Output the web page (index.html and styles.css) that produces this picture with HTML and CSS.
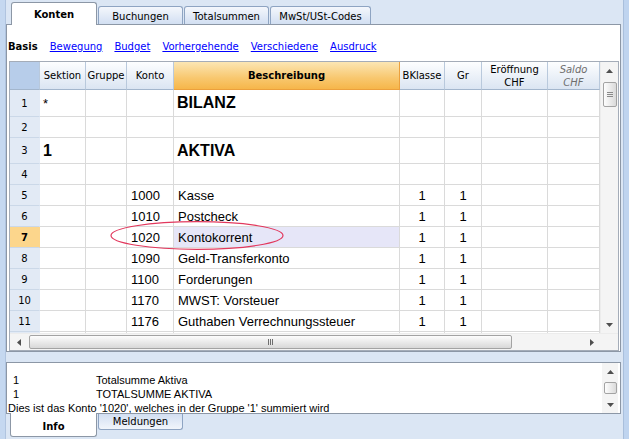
FILE: index.html
```html
<!DOCTYPE html>
<html lang="de">

<head>
    <meta charset="UTF-8">
    <title>Konten</title>
    <link rel="stylesheet" href="styles.css">
</head>

<body>
    <div class="app">
        <div class="edge-left"></div>

        <div class="workspace">
            <!-- Register oben -->
            <div class="tabs">
                <div class="tab active">Konten</div>
                <div class="tab">Buchungen</div>
                <div class="tab">Totalsummen</div>
                <div class="tab wide">MwSt/USt-Codes</div>
            </div>

            <div class="panel">
                <div class="views">
                    <b>Basis</b>
                    <a href="#">Bewegung</a>
                    <a href="#">Budget</a>
                    <a href="#">Vorhergehende</a>
                    <a href="#">Verschiedene</a>
                    <a href="#">Ausdruck</a>
                </div>

                <div class="table-box">
                    <div class="table-main">
                        <div class="table">
                            <div class="grid head">
                                <div class="hc corner"></div>
                                <div class="hc">Sektion</div>
                                <div class="hc">Gruppe</div>
                                <div class="hc">Konto</div>
                                <div class="hc current">Beschreibung</div>
                                <div class="hc">BKlasse</div>
                                <div class="hc">Gr</div>
                                <div class="hc">Eröffnung<br>CHF</div>
                                <div class="hc calc">Saldo<br>CHF</div>
                            </div>

                            <div class="rows">
                                <div class="grid row tall">
                                    <div class="c rn">1</div>
                                    <div class="c star">*</div>
                                    <div class="c"></div>
                                    <div class="c"></div>
                                    <div class="c big">BILANZ</div>
                                    <div class="c"></div>
                                    <div class="c"></div>
                                    <div class="c"></div>
                                    <div class="c"></div>
                                </div>
                                <div class="grid row">
                                    <div class="c rn">2</div>
                                    <div class="c"></div>
                                    <div class="c"></div>
                                    <div class="c"></div>
                                    <div class="c"></div>
                                    <div class="c"></div>
                                    <div class="c"></div>
                                    <div class="c"></div>
                                    <div class="c"></div>
                                </div>
                                <div class="grid row mid">
                                    <div class="c rn">3</div>
                                    <div class="c big">1</div>
                                    <div class="c"></div>
                                    <div class="c"></div>
                                    <div class="c big">AKTIVA</div>
                                    <div class="c"></div>
                                    <div class="c"></div>
                                    <div class="c"></div>
                                    <div class="c"></div>
                                </div>
                                <div class="grid row">
                                    <div class="c rn">4</div>
                                    <div class="c"></div>
                                    <div class="c"></div>
                                    <div class="c"></div>
                                    <div class="c"></div>
                                    <div class="c"></div>
                                    <div class="c"></div>
                                    <div class="c"></div>
                                    <div class="c"></div>
                                </div>
                                <div class="grid row">
                                    <div class="c rn">5</div>
                                    <div class="c"></div>
                                    <div class="c"></div>
                                    <div class="c">1000</div>
                                    <div class="c">Kasse</div>
                                    <div class="c mid-text">1</div>
                                    <div class="c mid-text">1</div>
                                    <div class="c"></div>
                                    <div class="c"></div>
                                </div>
                                <div class="grid row">
                                    <div class="c rn">6</div>
                                    <div class="c"></div>
                                    <div class="c"></div>
                                    <div class="c">1010</div>
                                    <div class="c">Postcheck</div>
                                    <div class="c mid-text">1</div>
                                    <div class="c mid-text">1</div>
                                    <div class="c"></div>
                                    <div class="c"></div>
                                </div>
                                <div class="grid row">
                                    <div class="c rn selected">7</div>
                                    <div class="c"></div>
                                    <div class="c"></div>
                                    <div class="c">1020</div>
                                    <div class="c focus">Kontokorrent</div>
                                    <div class="c mid-text">1</div>
                                    <div class="c mid-text">1</div>
                                    <div class="c"></div>
                                    <div class="c"></div>
                                </div>
                                <div class="grid row">
                                    <div class="c rn">8</div>
                                    <div class="c"></div>
                                    <div class="c"></div>
                                    <div class="c">1090</div>
                                    <div class="c">Geld-Transferkonto</div>
                                    <div class="c mid-text">1</div>
                                    <div class="c mid-text">1</div>
                                    <div class="c"></div>
                                    <div class="c"></div>
                                </div>
                                <div class="grid row">
                                    <div class="c rn">9</div>
                                    <div class="c"></div>
                                    <div class="c"></div>
                                    <div class="c">1100</div>
                                    <div class="c">Forderungen</div>
                                    <div class="c mid-text">1</div>
                                    <div class="c mid-text">1</div>
                                    <div class="c"></div>
                                    <div class="c"></div>
                                </div>
                                <div class="grid row">
                                    <div class="c rn">10</div>
                                    <div class="c"></div>
                                    <div class="c"></div>
                                    <div class="c">1170</div>
                                    <div class="c">MWST: Vorsteuer</div>
                                    <div class="c mid-text">1</div>
                                    <div class="c mid-text">1</div>
                                    <div class="c"></div>
                                    <div class="c"></div>
                                </div>
                                <div class="grid row">
                                    <div class="c rn">11</div>
                                    <div class="c"></div>
                                    <div class="c"></div>
                                    <div class="c">1176</div>
                                    <div class="c">Guthaben Verrechnungssteuer</div>
                                    <div class="c mid-text">1</div>
                                    <div class="c mid-text">1</div>
                                    <div class="c"></div>
                                    <div class="c"></div>
                                </div>
                                <!-- angeschnittene naechste Zeile -->
                                <div class="grid row">
                                    <div class="c rn"></div>
                                    <div class="c"></div>
                                    <div class="c"></div>
                                    <div class="c"></div>
                                    <div class="c"></div>
                                    <div class="c"></div>
                                    <div class="c"></div>
                                    <div class="c"></div>
                                    <div class="c"></div>
                                </div>
                            </div>

                            <!-- Markierung um Konto 1020 -->
                            <svg class="mark" width="176" height="32" viewBox="0 0 176 32">
                                <ellipse cx="87" cy="15.5" rx="86" ry="13.8" fill="none" stroke="#e2385d" stroke-width="1.2"/>
                            </svg>
                        </div>

                        <div class="vscroll">
                            <div class="sb-btn">
                                <svg width="7" height="4"><polygon points="0,4 3.5,0 7,4" fill="#4f4f4f"/></svg>
                            </div>
                            <div class="vthumb">
                                <span></span><span></span><span></span>
                            </div>
                            <div class="sb-fill"></div>
                            <div class="sb-btn">
                                <svg width="7" height="4"><polygon points="0,0 7,0 3.5,4" fill="#4f4f4f"/></svg>
                            </div>
                        </div>
                    </div>

                    <div class="hscroll-row">
                        <div class="hscroll">
                            <div class="sb-btn h">
                                <svg width="4" height="7"><polygon points="4,0 0,3.5 4,7" fill="#4f4f4f"/></svg>
                            </div>
                            <div class="hthumb">
                                <span></span><span></span><span></span>
                            </div>
                            <div class="sb-fill"></div>
                            <div class="sb-btn h">
                                <svg width="4" height="7"><polygon points="0,0 4,3.5 0,7" fill="#4f4f4f"/></svg>
                            </div>
                        </div>
                        <div class="sb-corner"></div>
                    </div>
                </div>
            </div>

            <!-- Infofenster -->
            <div class="info">
                <div class="info-text">
                    <div class="line"><span class="col1">1</span>Totalsumme Aktiva</div>
                    <div class="line"><span class="col1">1</span>TOTALSUMME AKTIVA</div>
                    <div class="line">Dies ist das Konto '1020', welches in der Gruppe '1' summiert wird</div>
                </div>
                <div class="vscroll small">
                    <div class="sb-btn">
                        <svg width="7" height="4"><polygon points="0,4 3.5,0 7,4" fill="#4f4f4f"/></svg>
                    </div>
                    <div class="vthumb short"></div>
                    <div class="sb-fill"></div>
                    <div class="sb-btn">
                        <svg width="7" height="4"><polygon points="0,0 7,0 3.5,4" fill="#4f4f4f"/></svg>
                    </div>
                </div>
            </div>

            <div class="bottom-tabs">
                <div class="btab active">Info</div>
                <div class="btab">Meldungen</div>
            </div>
        </div>

        <div class="edge-right"></div>
    </div>
</body>

</html>
```

FILE: styles.css
```css
* {
    box-sizing: border-box;
}

body {
    margin: 0;
    width: 629px;
    height: 439px;
    overflow: hidden;
    background-color: #dbe6f4;
    font-family: 'DejaVu Sans', sans-serif;
    font-size: 10px;
    color: #000;
}

.app {
    display: flex;
    height: 439px;
}

.edge-left {
    width: 6px;
    background-color: #c5d8f0;
    border-right: 1px solid #b0c4df;
}

.edge-right {
    width: 6px;
    margin-left: 2px;
    background-color: #bfd4ef;
    border-left: 1px solid #a9bfdc;
}

.workspace {
    width: 615px;
}

/* Register */
.tabs {
    display: flex;
    align-items: flex-end;
    height: 24px;
    padding-left: 5px;
    position: relative;
    z-index: 1;
}

.tab {
    width: 85px;
    height: 18px;
    margin-left: 1px;
    padding-top: 2px;
    border: 1px solid #8ea4c2;
    border-bottom: none;
    border-radius: 3px 3px 0 0;
    background: linear-gradient(#f4f7fc, #d2dff2);
    display: flex;
    align-items: center;
    justify-content: center;
}

.tab.active {
    width: 86px;
    height: 23px;
    margin-left: 0;
    margin-bottom: -1px;
    padding-top: 0;
    border-color: #8c97a6;
    background: #fff;
    font-weight: bold;
}

.tab.wide {
    width: 101px;
}

.panel {
    height: 328px;
    border: 1px solid #8c97a6;
    background-color: #fff;
}

.views {
    height: 36px;
    display: flex;
    align-items: center;
    gap: 12px;
    padding: 6px 0 0 1px;
}

.views a {
    color: #0000ff;
}

/* Tabelle */
.table-box {
    margin: 0 1px 0 2px;
    border: 1px solid #a4acb8;
}

.table-main {
    display: flex;
}

.table {
    width: 590px;
    position: relative;
}

.grid {
    display: grid;
    grid-template-columns: 30px 46px 41px 47px 226px 45px 37px 66px 52px;
}

.head {
    height: 28px;
}

.hc {
    border-right: 1px solid #b9c9dc;
    border-bottom: 1px solid #a3b6cd;
    background: linear-gradient(#fdfeff, #dbe5f2);
    display: flex;
    align-items: center;
    justify-content: center;
    text-align: center;
    line-height: 13px;
    white-space: nowrap;
}

.hc.corner {
    background: #b7cdea;
}

.hc.current {
    background: linear-gradient(#fbe6b4, #f8c76e 60%, #f6b64a);
    border-right-color: #eca03c;
    border-bottom-color: #eca03c;
    font-weight: bold;
}

.hc.calc {
    color: #6e6e6e;
    font-style: italic;
}

.rows {
    height: 243px;
    overflow: hidden;
}

.row {
    height: 21px;
}

.row.tall {
    height: 27px;
}

.row.mid {
    height: 26px;
}

.c {
    border-right: 1px solid #dadada;
    border-bottom: 1px solid #dadada;
    display: flex;
    align-items: center;
    padding: 0 4px;
    font-family: 'Liberation Sans', Arial, sans-serif;
    font-size: 13px;
    white-space: nowrap;
    overflow: hidden;
}

.c.rn {
    justify-content: center;
    padding: 0;
    background-color: #e2eaf5;
    border-right-color: #e2eaf5;
    border-bottom-color: #cbd8e8;
    font-family: 'DejaVu Sans', sans-serif;
    font-size: 10px;
}

.c.rn.selected {
    background-color: #fcd68c;
    border-right-color: #fcd68c;
    font-weight: bold;
}

.c.star {
    padding-left: 3px;
}

.c.big {
    padding-left: 3px;
    font-size: 16px;
    font-weight: bold;
}

.c.mid-text {
    justify-content: center;
}

.c.focus {
    background-color: #e6e6f8;
}

.mark {
    position: absolute;
    left: 100px;
    top: 158px;
}

/* Bildlaufleisten */
.vscroll {
    width: 18px;
    display: flex;
    flex-direction: column;
    background-color: #f4f4f4;
    border-left: 1px solid #ececec;
}

.sb-btn {
    height: 17px;
    display: flex;
    align-items: center;
    justify-content: center;
    flex-shrink: 0;
}

.sb-btn.h {
    width: 17px;
    height: auto;
}

.sb-fill {
    flex: 1;
}

.vthumb {
    height: 25px;
    margin: 3px 1px 0 2px;
    border: 1px solid #a3a3a3;
    border-radius: 2px;
    background: linear-gradient(to right, #fdfdfd, #dadada);
    display: flex;
    flex-direction: column;
    align-items: center;
    justify-content: center;
    gap: 1px;
}

.vthumb span {
    width: 6px;
    height: 1px;
    background-color: #8a8a8a;
}

.vthumb.short {
    height: 12px;
    margin-top: 2px;
}

.hscroll-row {
    display: flex;
    height: 17px;
    border-top: 1px solid #ececec;
}

.hscroll {
    width: 590px;
    display: flex;
    background-color: #f4f4f4;
}

.hthumb {
    width: 483px;
    margin: 1px 0 1px 2px;
    border: 1px solid #a3a3a3;
    border-radius: 2px;
    background: linear-gradient(#fdfdfd, #d8d8d8);
    display: flex;
    align-items: center;
    justify-content: center;
    gap: 1px;
}

.hthumb span {
    width: 1px;
    height: 6px;
    background-color: #6e6e6e;
}

.sb-corner {
    width: 18px;
    background-color: #f4f4f4;
}

/* Info */
.info {
    display: flex;
    height: 52px;
    margin-top: 10px;
    border: 1px solid #8c97a6;
    background-color: #fff;
}

.info-text {
    flex: 1;
    padding: 10px 0 0 1px;
    font-family: 'Liberation Sans', Arial, sans-serif;
    font-size: 11px;
    line-height: 14px;
    overflow: hidden;
    white-space: nowrap;
}

.col1 {
    display: inline-block;
    width: 88px;
    padding-left: 5px;
}

.vscroll.small {
    width: 16px;
    margin-right: 2px;
    border-left: none;
}

.bottom-tabs {
    display: flex;
    align-items: flex-start;
    padding-left: 4px;
}

.btab {
    width: 85px;
    height: 16px;
    margin-left: 1px;
    border: 1px solid #8ea4c2;
    border-top: none;
    border-radius: 0 0 3px 3px;
    background: linear-gradient(#d2dff2, #f1f5fb);
    display: flex;
    align-items: center;
    justify-content: center;
}

.btab.active {
    width: 87px;
    height: 24px;
    margin-left: 0;
    margin-top: -1px;
    padding-top: 3px;
    border-color: #8c97a6;
    background: #fff;
    font-weight: bold;
}
```
